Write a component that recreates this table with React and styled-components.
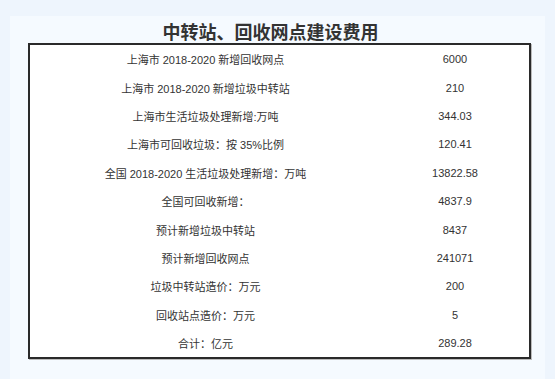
import React from "react";
import styled, { createGlobalStyle } from "styled-components";

const Global = createGlobalStyle`
  html, body { margin: 0; padding: 0; background: #eef5fd; }
  body { font-family: "Liberation Sans", "Noto Sans CJK SC", sans-serif; }
`;

const Page = styled.div`
  width: 555px;
  height: 379px;
  padding: 16px 0 0 10px;
  box-sizing: border-box;
  overflow: hidden;
`;

const Panel = styled.div`
  width: 535px;
  height: 400px;
  background: #f5faff;
  display: flex;
  flex-direction: column;
`;

const Title = styled.h1`
  margin: 0;
  padding-top: 3px;
  height: 27px;
  box-sizing: border-box;
  width: 521px;
  text-align: center;
  font-family: "Noto Sans CJK SC", sans-serif;
  font-size: 18px;
  line-height: 24px;
  font-weight: 700;
  color: #333;
`;

const Table = styled.table`
  margin-left: 18px;
  width: 503px;
  border-collapse: collapse;
  border: 2px solid #2a2a2a;
  box-shadow: 1px 1px 0 #bbb;
  background: #fff;
  table-layout: fixed;
`;

const Cell = styled.td`
  height: 28.4px;
  padding: 0;
  text-align: center;
  vertical-align: middle;
  font-family: "Liberation Sans", "Noto Sans CJK SC", sans-serif;
  font-size: 11px;
  color: #333;
  width: ${(p) => (p.$label ? "351px" : "auto")};
`;

const rows = [
  ["上海市 2018-2020 新增回收网点", "6000"],
  ["上海市 2018-2020 新增垃圾中转站", "210"],
  ["上海市生活垃圾处理新增:万吨", "344.03"],
  ["上海市可回收垃圾：按 35%比例", "120.41"],
  ["全国 2018-2020 生活垃圾处理新增：万吨", "13822.58"],
  ["全国可回收新增：", "4837.9"],
  ["预计新增垃圾中转站", "8437"],
  ["预计新增回收网点", "241071"],
  ["垃圾中转站造价：万元", "200"],
  ["回收站点造价：万元", "5"],
  ["合计：亿元", "289.28"],
];

export default function App() {
  return (
    <Page>
      <Global />
      <Panel>
        <Title>中转站、回收网点建设费用</Title>
        <Table>
          <tbody>
            {rows.map(([label, value]) => (
              <tr key={label}>
                <Cell $label>{label}</Cell>
                <Cell>{value}</Cell>
              </tr>
            ))}
          </tbody>
        </Table>
      </Panel>
    </Page>
  );
}
